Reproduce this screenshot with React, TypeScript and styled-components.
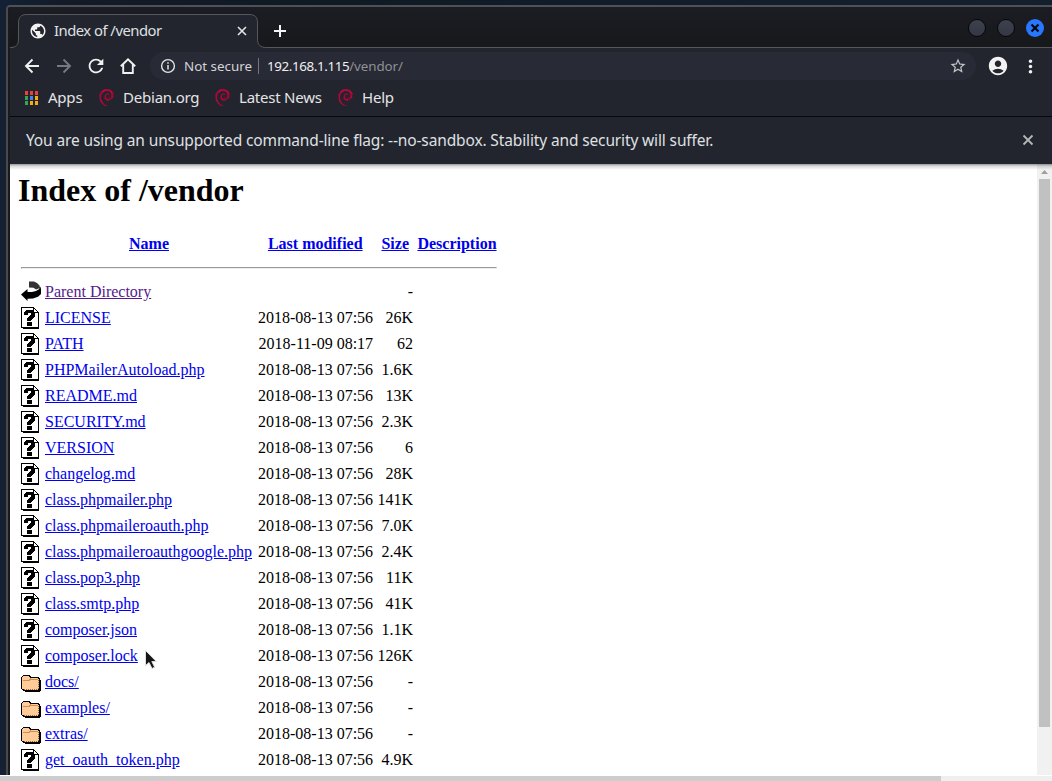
import React from 'react';
import styled, { createGlobalStyle } from 'styled-components';
import { SiDebian } from 'react-icons/si';
import { MdPublic, MdRefresh, MdStarBorder, MdAccountCircle, MdMoreVert } from 'react-icons/md';

const Global = createGlobalStyle`
  * { box-sizing: border-box; }
  html, body { margin: 0; padding: 0; overflow: hidden; }
`;

const Desktop = styled.div`
  width: 1052px;
  height: 781px;
  overflow: hidden;
  background: linear-gradient(90deg, #122136 0, #131b29 60px, #101926 300px, #15202e 100%);
  padding: 5px 0 0 6px;
  position: relative;
  display: flex;
  flex-direction: column;
  font-family: 'Noto Sans', sans-serif;
  &::before {
    content: '';
    position: absolute;
    left: 0;
    top: 8px;
    bottom: 5px;
    width: 6px;
    background: #152132;
  }
`;

const Window = styled.div`
  width: 1050px;
  height: 770px;
  flex: none;
  border-top: 2px solid #505153;
  border-left: 2px solid #4b4a4b;
  border-top-left-radius: 4px;
  padding-left: 2px;
  background: #191a20;
  overflow: hidden;
  display: flex;
  flex-direction: column;
`;

const TitleBar = styled.div`
  height: 41px;
  width: 1042px;
  flex: none;
  display: flex;
  background: linear-gradient(#1b1d24, #17181b);
  padding-top: 7px;
  position: relative;
  &::after {
    content: '';
    position: absolute;
    left: 0;
    right: 0;
    bottom: 0;
    height: 1px;
    background: #56575a;
  }
`;

const TabShape = styled.svg`
  position: absolute;
  left: 0;
  top: 7px;
  z-index: 1;
`;

const Tab = styled.div`
  position: relative;
  z-index: 2;
  margin-left: 8px;
  width: 240px;
  height: 34px;
  display: flex;
  align-items: center;
  padding: 0 10px 0 11px;
  color: #dfe0e2;
  font-size: 14.8px;
  letter-spacing: -0.5px;
`;

const TabTitle = styled.span`
  flex: 1;
  margin-left: 7px;
  padding-bottom: 2px;
  white-space: nowrap;
`;

const NewTab = styled.svg`
  margin: 11px 0 0 16px;
`;

const Controls = styled.div`
  margin-left: auto;
  display: flex;
  gap: 11px;
  padding: 5px 8px 0 0;
`;

const Dot = styled.span`
  width: 18px;
  height: 18px;
  border-radius: 50%;
  border: 1px solid #06070a;
  background: linear-gradient(#3d414e, #343844);
`;

const Toolbar = styled.div`
  height: 36px;
  width: 1042px;
  flex: none;
  display: flex;
  align-items: center;
  background: #23252e;
  padding-left: 12px;
`;

const NavIcon = styled.svg`
  width: 20px;
  height: 20px;
  margin-right: 12px;
  flex: none;
`;

const ReloadIcon = styled(MdRefresh)`
  width: 22px;
  height: 22px;
  margin: 0 11px 0 -1px;
  flex: none;
  color: #f1f1f1;
`;

const Address = styled.div`
  width: 826px;
  flex: none;
  height: 28px;
  border-radius: 14px;
  background: #282a35;
  display: flex;
  align-items: center;
  padding: 0 9px 0 10px;
  font-size: 13.4px;
  white-space: nowrap;
`;

const AddressText = styled.div`
  flex: 1;
  display: flex;
  align-items: center;
  padding-bottom: 1px;
`;

const Secure = styled.span`
  color: #d3d4d6;
  width: 68px;
  margin-left: 8px;
`;

const Separator = styled.span`
  width: 1px;
  height: 16px;
  background: #75777d;
  margin: 0 8px 0 6px;
`;

const Host = styled.span`
  color: #f0f0f1;
  letter-spacing: -0.4px;
`;

const Path = styled.span`
  color: #8f9196;
  letter-spacing: -0.1px;
`;

const Account = styled(MdAccountCircle)`
  margin-left: 11px;
  flex: none;
  color: #f2f2f2;
`;

const More = styled(MdMoreVert)`
  margin-left: 11px;
  flex: none;
  color: #f2f2f2;
`;

const Bookmarks = styled.div`
  height: 32px;
  width: 1042px;
  flex: none;
  background: #23252e;
  display: flex;
  padding: 0 0 5px 14px;
  color: #e3e4e5;
  font-size: 15px;
  letter-spacing: -0.22px;
`;

const Bookmark = styled.div<{ $width: number }>`
  width: ${p => p.$width}px;
  display: flex;
  align-items: center;
  gap: 8px;
  white-space: nowrap;
`;

const BookmarkLabel = styled.span`
  padding-bottom: 2px;
`;

const DebianIcon = styled(SiDebian)`
  width: 17px;
  height: 17px;
  margin: 0 0 0 -1px;
  color: #c4093f;
  stroke: #c4093f;
  stroke-width: 0.7px;
`;

const InfoBar = styled.div`
  height: 48px;
  width: 1042px;
  flex: none;
  border-top: 1px solid #07080a;
  background: #23252e;
  display: flex;
  align-items: center;
  justify-content: space-between;
  padding: 0 18px 1px 16px;
  color: #dfe0e2;
  font-size: 15.5px;
  letter-spacing: -0.135px;
  white-space: nowrap;
`;

const Viewport = styled.div`
  width: 1042px;
  height: 611px;
  display: flex;
  background: #fff;
  position: relative;
  overflow: hidden;
  &::before {
    content: '';
    position: absolute;
    left: 0;
    right: 0;
    top: 0;
    height: 6px;
    background: linear-gradient(#00000066, #00000022 40%, #0000);
  }
`;

const Page = styled.div`
  flex: 1;
  padding: 8px;
  color: #000;
  font: 16px 'Liberation Serif', serif;
`;

const Heading = styled.h1`
  margin: 0 0 21px;
  font-size: 32px;
  line-height: 37px;
`;

const Listing = styled.table`
  table-layout: fixed;
  width: 482px;
  border-spacing: 2px;
  line-height: 18px;
  white-space: nowrap;
  td, th { padding: 1px; height: 24px; }
`;

const Icon = styled.svg`
  display: block;
`;

const Right = styled.td`
  text-align: right;
`;

const DateText = styled.span`
  margin-right: 0.4px;
`;

const Rule = styled.hr`
  margin: 8px 0;
`;

const Link = styled.a<{ $visited?: boolean }>`
  color: ${p => (p.$visited ? '#551a8b' : '#0000ee')};
  text-decoration: underline;
`;

const Scroll = styled.div`
  width: 15px;
  background: #f1f1f1;
  display: flex;
  flex-direction: column;
  align-items: center;
`;

const Thumb = styled.div`
  width: 11px;
  height: 548px;
  background: #c1c1c1;
`;

const BottomScroll = styled.div`
  position: absolute;
  left: 0;
  bottom: 0;
  width: 1052px;
  height: 6px;
  border-top: 1px solid #fff;
  background: #efefef;
`;

const BottomThumb = styled.div`
  width: 941px;
  height: 5px;
  background: #cdcdcd;
`;

const Pointer = styled.svg`
  position: absolute;
  left: 144px;
  top: 649px;
`;

const UnknownIcon = () => (
  <Icon width="20" height="22" shapeRendering="crispEdges">
    <path d="M0 0h13v1h1v1h1v1h1v1h1v1h1v17H2v-1H0z" fill="#000" />
    <path d="M1 1h11v5h5v14H1z" fill="#fff" />
    <path d="M13 2h1v1h1v1h1v1h-3z" fill="#fff" />
    <path d="M4 4h1V3h7v1h1v1h1v5h-1v1h-1v1h-1v1h-1v1H6v-3h1v-1h1V9h1V8h1V6H7v2H3V5h1zM6 15h5v4H6z" fill="#000" />
  </Icon>
);

const BackIcon = () => (
  <Icon width="20" height="22">
    <path d="M8 .5h5l3 1.500 2.500 2.500.5 2.500-4 1.500-2.500-1.800L8 6.500z" fill="#333" />
    <path d="M0 13.500L6.500 8v3H11l4-1 3-1.800 1.300-2.700.7 2.500v5l-3 2.800-5 1.700-5.500.3V20z" fill="#000" />
  </Icon>
);

const FolderIcon = () => (
  <Icon width="20" height="22" shapeRendering="crispEdges">
    <g transform="translate(0 1)">
      <path d="M2 3h7v1h1v1h8v1h1v2h1v11h-1v1H4v-1H2v-1H1v-1H0V5h1V4h1z" fill="#000" />
      <path d="M2 4h6v1h1v1h8v1h1v10h-1v1H3v-1H1V5h1z" fill="#ffcc99" />
      <path d="M2 8h6v-1h1v-1h1v1h7v1H9v1H2z" fill="#cc8f55" />
      <path d="M3 17.5h14M17.5 8v9" stroke="#996633" strokeDasharray="1 1" />
    </g>
  </Icon>
);

const icons = { unknown: UnknownIcon, back: BackIcon, folder: FolderIcon };

const AppsIcon = () => {
  const colors = ['#ee4035', '#ee4035', '#ee4035', '#35a35a', '#4285f4', '#f5ae0c', '#35a35a', '#f5ae0c', '#f5ae0c'];
  return (
    <svg width="16" height="16">
      {colors.map((c, i) => (
        <rect key={i} x={1 + (i % 3) * 5} y={1 + Math.floor(i / 3) * 5} width="3" height="4" fill={c} />
      ))}
    </svg>
  );
};

const bookmarks = [
  { label: 'Debian.org', width: 116 },
  { label: 'Latest News', width: 123 },
  { label: 'Help', width: 100 },
];

const D = '2018-08-13 07:56';
const files: [keyof typeof icons, string, string, string][] = [
  ['back', 'Parent Directory', '', '-'],
  ['unknown', 'LICENSE', D, '26K'],
  ['unknown', 'PATH', '2018-11-09 08:17', '62'],
  ['unknown', 'PHPMailerAutoload.php', D, '1.6K'],
  ['unknown', 'README.md', D, '13K'],
  ['unknown', 'SECURITY.md', D, '2.3K'],
  ['unknown', 'VERSION', D, '6'],
  ['unknown', 'changelog.md', D, '28K'],
  ['unknown', 'class.phpmailer.php', D, '141K'],
  ['unknown', 'class.phpmaileroauth.php', D, '7.0K'],
  ['unknown', 'class.phpmaileroauthgoogle.php', D, '2.4K'],
  ['unknown', 'class.pop3.php', D, '11K'],
  ['unknown', 'class.smtp.php', D, '41K'],
  ['unknown', 'composer.json', D, '1.1K'],
  ['unknown', 'composer.lock', D, '126K'],
  ['folder', 'docs/', D, '-'],
  ['folder', 'examples/', D, '-'],
  ['folder', 'extras/', D, '-'],
  ['unknown', 'get_oauth_token.php', D, '4.9K'],
];

export default function App() {
  return (
    <Desktop>
      <Global />
      <Window>
        <TitleBar>
          <TabShape width="260" height="34">
            <path d="M0 34C6 33.500 8.500 31 8.500 25V9C8.500 3 11 .5 17 .5H239c6 0 8.500 2.500 8.500 8.500V25c0 6 3 8.500 9 8.500V34z" fill="#23252e" />
            <path d="M0 33.500C6 33.500 8.500 31 8.500 25V9C8.500 3 11 .5 17 .5H239c6 0 8.500 2.500 8.500 8.500V25c0 6 3 8.500 9 8.500" fill="none" stroke="#56575a" />
          </TabShape>
          <Tab>
            <MdPublic size={18} color="#f2f2f2" />
            <TabTitle>Index of /vendor</TabTitle>
            <svg width="12" height="12"><path d="M2 2l8 8M10 2l-8 8" stroke="#e4e4e5" strokeWidth="1.600" /></svg>
          </Tab>
          <NewTab width="12" height="12"><path d="M6 0v12M0 6h12" stroke="#f4f4f4" strokeWidth="2" /></NewTab>
          <Controls>
            <Dot />
            <Dot />
            <svg width="18" height="18"><circle cx="9" cy="9" r="9" fill="#2777ff" /><path d="M5.500 5.500l7 7M12.500 5.500l-7 7" stroke="#05070c" strokeWidth="2.200" /></svg>
          </Controls>
        </TitleBar>
        <Toolbar>
          <NavIcon viewBox="0 0 20 20"><path d="M17 10H4M10.500 3.500L4 10l6.500 6.500" fill="none" stroke="#f1f1f1" strokeWidth="1.900" /></NavIcon>
          <NavIcon viewBox="0 0 20 20"><path d="M3 10h13M9.500 3.500L16 10l-6.500 6.500" fill="none" stroke="#777980" strokeWidth="1.900" /></NavIcon>
          <ReloadIcon />
          <NavIcon viewBox="0 0 20 20"><path d="M2.800 10.200L10 3.200l7.200 7M5.200 8.500V17h9.600V8.500" fill="none" stroke="#f1f1f1" strokeWidth="1.900" /></NavIcon>
          <Address>
            <svg width="16" height="16" viewBox="0 0 16 16"><circle cx="8" cy="8" r="6.400" fill="none" stroke="#e4e4e5" strokeWidth="1.400" /><path d="M8 7v4.500M8 4.200v1.600" stroke="#e4e4e5" strokeWidth="1.500" /></svg>
            <AddressText>
              <Secure>Not secure</Secure>
              <Separator />
              <Host>192.168.1.115</Host>
              <Path>/vendor/</Path>
            </AddressText>
            <MdStarBorder size={18} color="#c4c5c7" />
          </Address>
          <Account size={22} />
          <More size={21} />
        </Toolbar>
        <Bookmarks>
          <Bookmark $width={75}><AppsIcon /><BookmarkLabel>Apps</BookmarkLabel></Bookmark>
          {bookmarks.map(b => (
            <Bookmark key={b.label} $width={b.width}>
              <DebianIcon />
              <BookmarkLabel>{b.label}</BookmarkLabel>
            </Bookmark>
          ))}
        </Bookmarks>
        <InfoBar>
          <span>You are using an unsupported command-line flag: --no-sandbox. Stability and security will suffer.</span>
          <svg width="12" height="12"><path d="M1.500 1.500l9 9M10.500 1.500l-9 9" stroke="#b5b6b8" strokeWidth="1.800" /></svg>
        </InfoBar>
        <Viewport>
          <Page>
            <Heading>Index of /vendor</Heading>
            <Listing>
              <colgroup>
                <col style={{ width: 22 }} /><col style={{ width: 210 }} /><col style={{ width: 118.5 }} /><col style={{ width: 37.5 }} /><col style={{ width: 82 }} />
              </colgroup>
              <tbody>
                <tr>
                  <th />
                  {['Name', 'Last modified', 'Size', 'Description'].map(h => <th key={h}><Link>{h}</Link></th>)}
                </tr>
                <tr><td colSpan={5} style={{ height: 20 }}><Rule /></td></tr>
                {files.map(([kind, name, date, size]) => {
                  const FileIcon = icons[kind];
                  return (
                    <tr key={name}>
                      <td><FileIcon /></td>
                      <td><Link $visited={kind === 'back'}>{name}</Link></td>
                      <Right><DateText>{date}</DateText></Right>
                      <Right>{size}</Right>
                      <td />
                    </tr>
                  );
                })}
              </tbody>
            </Listing>
          </Page>
          <Scroll>
            <svg width="15" height="15"><path d="M4 10l3.500-4L11 10z" fill="#a0a0a0" /></svg>
            <Thumb />
          </Scroll>
        </Viewport>
      </Window>
      <Pointer width="16" height="22"><path d="M1.500 1.500v15l3.500-3 3 6 2.700-1.300-2.900-5.700h4.500z" fill="#151515" stroke="#ddd" /></Pointer>
      <BottomScroll><BottomThumb /></BottomScroll>
    </Desktop>
  );
}
